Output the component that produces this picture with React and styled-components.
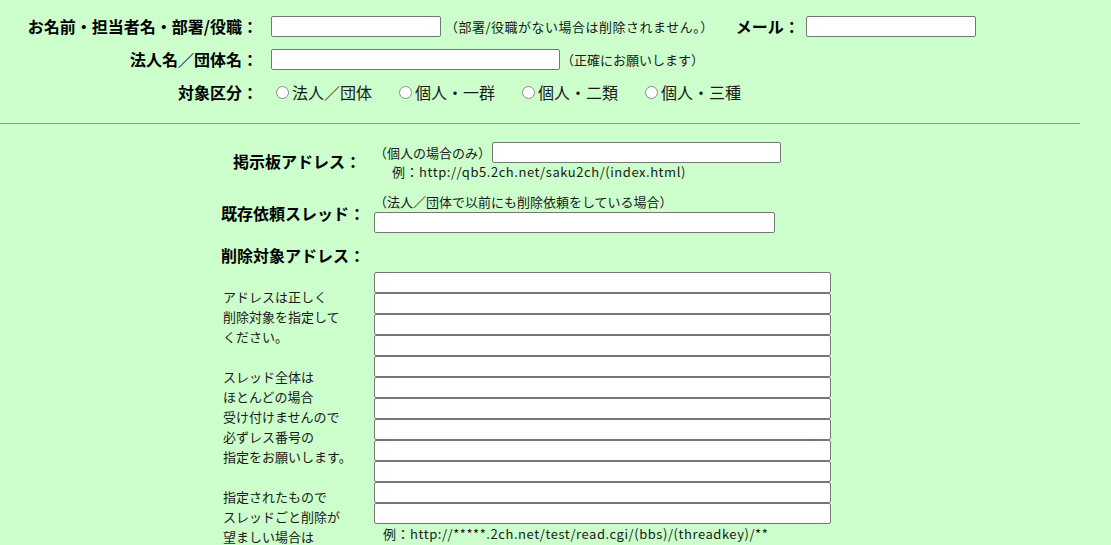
import React from 'react'
import styled, { createGlobalStyle } from 'styled-components'

const GlobalStyle = createGlobalStyle`
  body {
    margin: 0;
    background: #ccffcc;
    font-family: "Noto Sans CJK JP", "Noto Sans", sans-serif;
    color: #000;
  }
`

const Page = styled.div`
  padding-top: 16px;
`

const TopGrid = styled.div`
  display: grid;
  grid-template-columns: 258px auto;
  grid-auto-rows: 21px;
  column-gap: 13px;
  row-gap: 12px;
  align-items: center;
`

const Label = styled.label`
  font-size: 16px;
  font-weight: 700;
  line-height: 21px;
  text-align: right;
  white-space: nowrap;
`

const Field = styled.div`
  display: flex;
  align-items: center;
  white-space: nowrap;
`

const TextInput = styled.input`
  box-sizing: border-box;
  display: ${props => (props.$block ? 'block' : 'inline-block')};
  width: ${props => props.$w}px;
  height: 21px;
  margin: 0;
  margin-left: ${props => props.$ml || 0}px;
  padding: 1px 3px;
  border: 1px solid #767676;
  border-radius: 2px;
  background: #fff;
  font-size: 13px;
`

const Note = styled.span`
  font-size: 13px;
  line-height: 17px;
  color: #1a1a1a;
  margin-left: ${props => props.$ml || 0}px;
  letter-spacing: ${props => props.$ls || 0}px;
`

const MailLabel = styled(Label)`
  margin: 0 6px 0 22px;
`

const RadioGroup = styled.div`
  display: flex;
  align-items: center;
  gap: 22px;
`

const RadioOption = styled.label`
  display: flex;
  align-items: center;
  font-size: 16px;
  line-height: 21px;
  color: #1a1a1a;
`

const Radio = styled.input`
  appearance: none;
  width: 13px;
  height: 13px;
  margin: 0 3px 0 5px;
  border: 1px solid #8a8a8a;
  border-radius: 50%;
  background: #fff;
  box-sizing: border-box;
`

const Rule = styled.hr`
  width: 1080px;
  margin: 20px 0 0 0;
  border: none;
  border-top: 1px solid #8f9f8f;
`

const Section = styled.div`
  margin-left: 221px;
`

const Row = styled.div`
  display: flex;
  align-items: ${props => (props.$top ? 'flex-start' : 'center')};
  column-gap: 13px;
  margin-top: ${props => props.$mt || 0}px;
`

const RowLabel = styled(Label)`
  width: 140px;
  flex: none;
`

const Content = styled.div`
  display: flex;
  flex-direction: column;
`

const Line = styled.div`
  display: flex;
  align-items: center;
  height: ${props => props.$h || 21}px;
  margin-bottom: ${props => props.$mb || 0}px;
`

const Example = styled.div`
  font-size: 13px;
  line-height: 17px;
  letter-spacing: 0.55px;
  color: #1a1a1a;
  padding-left: ${props => props.$pl}px;
  margin-top: ${props => props.$mt || 0}px;
  white-space: nowrap;
`

const Hint = styled.div`
  width: 140px;
  flex: none;
  padding: 15px 0 0 2px;
  box-sizing: border-box;
  font-size: 13px;
  line-height: 20px;
  color: #1a1a1a;
`

const Gap = styled.div`
  height: 20px;
`

const radios = ['法人／団体', '個人・一群', '個人・二類', '個人・三種']

const App = () => {
  return (
    <Page>
      <GlobalStyle />
      <TopGrid>
        <Label htmlFor="name">お名前・担当者名・部署/役職：</Label>
        <Field>
          <TextInput id="name" type="text" $w={170} />
          <Note $ml={4} $ls={0.5}>（部署/役職がない場合は削除されません。）</Note>
          <MailLabel htmlFor="mail">メール：</MailLabel>
          <TextInput id="mail" type="text" $w={170} />
        </Field>

        <Label htmlFor="corp">法人名／団体名：</Label>
        <Field>
          <TextInput id="corp" type="text" $w={289} />
          <Note $ml={1}>（正確にお願いします）</Note>
        </Field>

        <Label>対象区分：</Label>
        <RadioGroup>
          {radios.map(r => (
            <RadioOption key={r}>
              <Radio type="radio" name="kind" />
              {r}
            </RadioOption>
          ))}
        </RadioGroup>
      </TopGrid>

      <Rule />

      <Section>
        <Row $mt={18}>
          <RowLabel htmlFor="board">掲示板アドレス：</RowLabel>
          <Content>
            <Line>
              <Note>（個人の場合のみ）</Note>
              <TextInput id="board" type="text" $w={289} $ml={1} />
            </Line>
            <Example $pl={18}>例：http://qb5.2ch.net/saku2ch/(index.html)</Example>
          </Content>
        </Row>

        <Row $mt={13}>
          <RowLabel htmlFor="thread">既存依頼スレッド：</RowLabel>
          <Content>
            <Line $h={17} $mb={2}>
              <Note>（法人／団体で以前にも削除依頼をしている場合）</Note>
            </Line>
            <TextInput id="thread" type="text" $w={401} $block />
          </Content>
        </Row>

        <Row $mt={12}>
          <RowLabel>削除対象アドレス：</RowLabel>
        </Row>

        <Row $top $mt={6}>
          <Hint>
            アドレスは正しく<br />
            削除対象を指定して<br />
            ください。
            <Gap />
            スレッド全体は<br />
            ほとんどの場合<br />
            受け付けませんので<br />
            必ずレス番号の<br />
            指定をお願いします。
            <Gap />
            指定されたもので<br />
            スレッドごと削除が<br />
            望ましい場合は
          </Hint>
          <Content>
            {Array.from({ length: 12 }).map((_, i) => (
              <TextInput key={i} type="text" $w={457} $block />
            ))}
            <Example $pl={9} $mt={1}>例：http://*****.2ch.net/test/read.cgi/(bbs)/(threadkey)/**</Example>
          </Content>
        </Row>
      </Section>
    </Page>
  )
}

export default App
